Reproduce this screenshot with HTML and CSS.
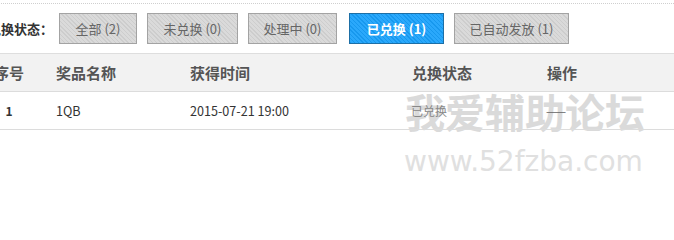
FILE: index.html
```html
<!DOCTYPE html>
<html lang="zh-CN">
<head>
<meta charset="utf-8">
<title>兑换记录</title>
<link rel="stylesheet" href="styles.css">
</head>
<body>
<div class="wrap">
  <div class="filter">
    <span class="filter-label">兑换状态：</span>
    <a class="btn">全部 (2)</a>
    <a class="btn">未兑换 (0)</a>
    <a class="btn">处理中 (0)</a>
    <a class="btn btn-active">已兑换 (1)</a>
    <a class="btn">已自动发放 (1)</a>
  </div>
  <div class="table">
    <div class="row head">
      <div class="c1">序号</div>
      <div class="c2">奖品名称</div>
      <div class="c3">获得时间</div>
      <div class="c4">兑换状态</div>
      <div class="c5">操作</div>
    </div>
    <div class="row data">
      <div class="c1 num">1</div>
      <div class="c2 latin">1QB</div>
      <div class="c3 latin">2015-07-21 19:00</div>
      <div class="c4 status">已兑换</div>
      <div class="c5 dash">——</div>
    </div>
  </div>
</div>
<div class="watermark">
  <div class="wm-cn">我爱辅助论坛</div>
  <div class="wm-en">www.52fzba.com</div>
</div>
</body>
</html>
```
FILE: styles.css
```css
html, body {
  margin: 0;
  padding: 0;
  background: #fff;
  overflow: hidden;
}
body {
  width: 674px;
  height: 203px;
  position: relative;
  font-family: "Noto Sans CJK SC", "Liberation Sans", sans-serif;
  color: #333;
}
.wrap {
  margin-left: -20px;
  width: 720px;
  padding-top: 3px;
  position: relative;
  z-index: 2;
}
.filter {
  border-top: 1px dotted #cfcfcf;
  display: flex;
  align-items: center;
  padding: 9px 0 9px 8px;
  height: 31px;
}
.filter-label {
  font-size: 13px;
  font-weight: bold;
  color: #333;
  margin-right: 6px;
  line-height: 31px;
}
.btn {
  box-sizing: border-box;
  height: 31px;
  line-height: 29px;
  padding: 0;
  margin-right: 10px;
  border: 1px solid #a3a3a3;
  font-size: 13px;
  color: #666;
  text-align: center;
  background: repeating-linear-gradient(45deg, #cdcdcd 0, #cdcdcd 1px, #dadada 1px, #dadada 3px);
  cursor: pointer;
}
.btn:nth-of-type(1) { width: 78px; }
.btn:nth-of-type(2) { width: 91px; }
.btn:nth-of-type(3) { width: 89px; margin-right: 12px; }
.btn:nth-of-type(4) { width: 95px; }
.btn:nth-of-type(5) { width: 115px; }
.btn-active {
  background: repeating-linear-gradient(45deg, #1798ee 0, #1798ee 1px, #2aa8fb 1px, #2aa8fb 3px);
  border-color: #1d6fa6;
  color: #fff;
  font-weight: bold;
}
.table {
  border-top: 1px solid #dedede;
}
.row {
  display: grid;
  grid-template-columns: 76px 134px 222px 135px 1fr;
  align-items: center;
  height: 37px;
  border-bottom: 1px solid #dcdcdc;
}
.head {
  background: #f2f2f2;
  font-size: 15px;
  font-weight: bold;
  color: #555;
}
.data {
  font-size: 12px;
  color: #333;
}
.latin {
  font-size: 12.6px;
}
.c1 {
  text-align: center;
  padding-right: 18px;
}
.num { font-weight: bold; }
.data .c4 { margin-left: -1px; }
.status { color: #888; }
.dash { color: #666; margin-left: -1px; }
.watermark {
  position: absolute;
  left: 405px;
  top: 86px;
  z-index: 1;
  color: #dadada;
  pointer-events: none;
}
.wm-cn {
  font-family: "Noto Sans CJK SC", sans-serif;
  font-size: 40px;
  font-weight: bold;
  line-height: 50px;
}
.wm-en {
  font-family: "DejaVu Sans", sans-serif;
  font-size: 28px;
  line-height: 34px;
  margin-top: 9px;
  margin-left: -1px;
  color: #e0e0e0;
}
```
